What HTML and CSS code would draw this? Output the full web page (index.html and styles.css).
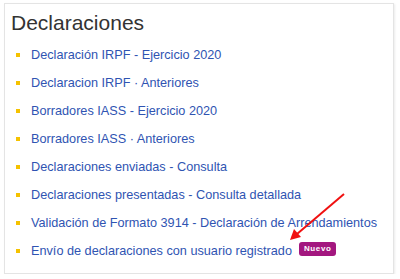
FILE: index.html
```html
<!DOCTYPE html>
<html lang="es">

<head>
  <meta charset="UTF-8">
  <meta name="viewport" content="width=device-width, initial-scale=1.0">
  <title>Declaraciones</title>
  <link rel="stylesheet" href="styles.css">
</head>

<body>
  <div class="panel">
    <h2 class="panel-title">Declaraciones</h2>
    <ul class="links">
      <li class="link-item"><a href="#">Declaración IRPF - Ejercicio 2020</a></li>
      <li class="link-item"><a href="#">Declaracion IRPF · Anteriores</a></li>
      <li class="link-item"><a href="#">Borradores IASS - Ejercicio 2020</a></li>
      <li class="link-item"><a href="#">Borradores IASS · Anteriores</a></li>
      <li class="link-item"><a href="#">Declaraciones enviadas - Consulta</a></li>
      <li class="link-item"><a href="#">Declaraciones presentadas - Consulta detallada</a></li>
      <li class="link-item"><a href="#">Validación de Formato 3914 - Declaración de Arrendamientos</a></li>
      <li class="link-item"><a href="#">Envío de declaraciones con usuario registrado</a><span class="badge">Nuevo</span></li>
    </ul>
    <svg class="arrow" width="70" height="60" viewBox="0 0 70 60">
      <line x1="63" y1="8" x2="16" y2="48" stroke="#f01010" stroke-width="2" />
      <polygon points="9,54 13,43 20,51" fill="#f01010" />
    </svg>
  </div>
</body>

</html>
```

FILE: styles.css
```css
body {
  margin: 0;
  background: #fff;
  font-family: "Liberation Sans", Arial, sans-serif;
}

.panel {
  position: relative;
  width: 388px;
  height: 269px;
  margin: 3px 0 0 4px;
  border: 1px solid #e4e4e4;
  box-shadow: 1px 1px 2px rgba(0, 0, 0, .08);
  background: #fff;
}

.panel-title {
  margin: 0;
  padding: 6px 0 0 6px;
  font-size: 21px;
  font-weight: normal;
  line-height: 26px;
  color: #333;
}

.links {
  list-style: none;
  margin: 0;
  padding: 5px 0 0 11px;
}

.link-item {
  display: flex;
  align-items: center;
  height: 28px;
  font-size: 12.7px;
}

.link-item::before {
  content: '';
  width: 4px;
  height: 4px;
  margin-right: 11px;
  background: #f5c200;
}

.link-item a {
  color: #2f54b2;
  text-decoration: none;
}

.badge {
  margin: -4px 0 0 7px;
  padding: 2px 5px;
  border-radius: 3px;
  background: #a3177f;
  color: #fff;
  font-size: 8px;
  font-weight: bold;
  line-height: 10px;
  letter-spacing: .6px;
}

.arrow {
  position: absolute;
  left: 276px;
  top: 182px;
}
```
